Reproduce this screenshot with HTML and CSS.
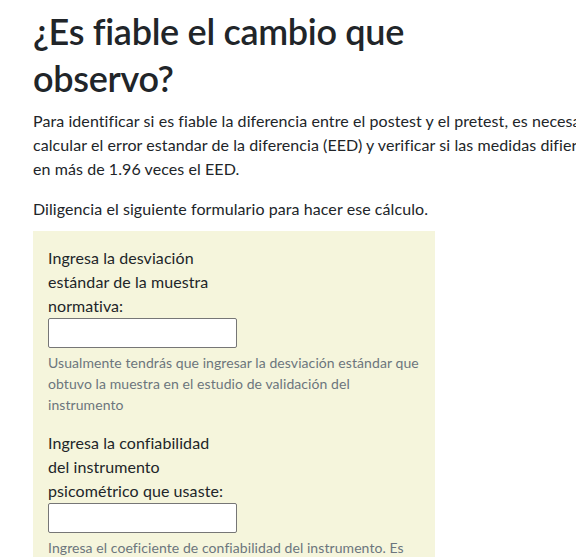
FILE: index.html
```html
<!DOCTYPE html>
<html lang="es">
<head>
<meta charset="utf-8">
<title>¿Es fiable el cambio que observo?</title>
<link rel="stylesheet" href="styles.css">
</head>
<body>
<main class="page">
  <h1 class="title">¿Es fiable el cambio que observo?</h1>
  <p class="lead-text">Para identificar si es fiable la diferencia entre el postest y el pretest, es necesario calcular el error estandar de la diferencia (EED) y verificar si las medidas difieren en más de 1.96 veces el EED.</p>
  <p class="intro">Diligencia el siguiente formulario para hacer ese cálculo.</p>
  <form class="calc-form">
    <div class="form-group">
      <label class="field-label" for="de">Ingresa la desviación estándar de la muestra normativa:</label>
      <input class="field-input" type="text" id="de">
      <small class="form-help">Usualmente tendrás que ingresar la desviación estándar que obtuvo la muestra en el estudio de validación del instrumento</small>
    </div>
    <div class="form-group">
      <label class="field-label" for="conf">Ingresa la confiabilidad del instrumento psicométrico que usaste:</label>
      <input class="field-input" type="text" id="conf">
      <small class="form-help">Ingresa el coeficiente de confiabilidad del instrumento. Es necesario que el valor esté entre 0 y 1.</small>
    </div>
  </form>
</main>
</body>
</html>
```
FILE: styles.css
```css
html {
  overflow: hidden;
}

body {
  margin: 0;
  font-family: Lato, "Liberation Sans", sans-serif;
  font-size: 16px;
  line-height: 24px;
  color: #212529;
  background: #ffffff;
  letter-spacing: 0.075px;
  font-variant-ligatures: none;
}

.page {
  padding: 8px 0 0 33px;
}

.title {
  margin: 0 0 7px;
  font-size: 36px;
  line-height: 47px;
  font-weight: 600;
  letter-spacing: -0.3px;
  width: 420px;
}

.lead-text {
  margin: 0 0 16px;
  width: 572px;
}

.intro {
  margin: 0 0 10px;
}

.calc-form {
  width: 402px;
  box-sizing: border-box;
  padding: 15px 15px 16px;
  background: #f5f5dc;
}

.form-group {
  margin-bottom: 16px;
}

.field-label {
  display: block;
  width: 180px;
}

.field-input {
  display: block;
  box-sizing: border-box;
  width: 189px;
  height: 30px;
  margin: 0;
  padding: 1px 2px;
  border: 1px solid #767676;
  border-radius: 2px;
  background: #ffffff;
  font: inherit;
}

.form-help {
  display: block;
  margin-top: 4px;
  font-size: 14px;
  line-height: 21px;
  color: #6c757d;
}
```
